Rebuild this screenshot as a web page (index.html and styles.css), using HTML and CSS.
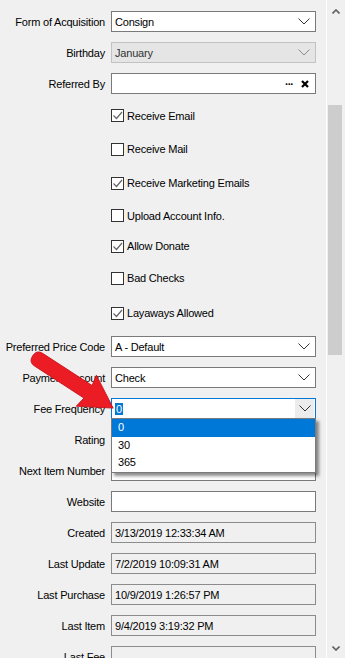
FILE: index.html
```html
<!DOCTYPE html>
<html lang="en">
<head>
    <meta charset="UTF-8">
    <meta name="viewport" content="width=device-width, initial-scale=1.0">
    <title>Customer Details</title>
    <link rel="stylesheet" href="styles.css">
</head>
<body>
    <div class="window">
        <div class="form">
            <div class="row">
                <span class="label">Form of Acquisition</span>
                <div class="combo">
                    <span class="value">Consign</span>
                    <span class="chevron"><svg width="12" height="7" viewBox="0 0 12 7"><polyline points="0.5,0.5 6,6 11.5,0.5" /></svg></span>
                </div>
            </div>
            <div class="row">
                <span class="label">Birthday</span>
                <div class="combo disabled">
                    <span class="value">January</span>
                    <span class="chevron"><svg width="12" height="7" viewBox="0 0 12 7"><polyline points="0.5,0.5 6,6 11.5,0.5" /></svg></span>
                </div>
            </div>
            <div class="row">
                <span class="label">Referred By</span>
                <div class="field lookup">
                    <span class="value"></span>
                    <span class="dots">&middot;&middot;&middot;</span>
                    <svg class="clear" width="8" height="8" viewBox="0 0 8 8"><path d="M1 1 L7 7 M7 1 L1 7" /></svg>
                </div>
            </div>

            <div class="check-row first">
                <span class="checkbox checked"><svg width="11" height="11" viewBox="0 0 11 11"><polyline points="1.5,5.5 4.5,8.5 10,2" /></svg></span>
                <span>Receive Email</span>
            </div>
            <div class="check-row">
                <span class="checkbox"></span>
                <span>Receive Mail</span>
            </div>
            <div class="check-row">
                <span class="checkbox checked"><svg width="11" height="11" viewBox="0 0 11 11"><polyline points="1.5,5.5 4.5,8.5 10,2" /></svg></span>
                <span>Receive Marketing Emails</span>
            </div>
            <div class="check-row short">
                <span class="checkbox"></span>
                <span>Upload Account Info.</span>
            </div>
            <div class="check-row shorter">
                <span class="checkbox checked"><svg width="11" height="11" viewBox="0 0 11 11"><polyline points="1.5,5.5 4.5,8.5 10,2" /></svg></span>
                <span>Allow Donate</span>
            </div>
            <div class="check-row">
                <span class="checkbox"></span>
                <span>Bad Checks</span>
            </div>
            <div class="check-row last">
                <span class="checkbox checked"><svg width="11" height="11" viewBox="0 0 11 11"><polyline points="1.5,5.5 4.5,8.5 10,2" /></svg></span>
                <span>Layaways Allowed</span>
            </div>

            <div class="row">
                <span class="label">Preferred Price Code</span>
                <div class="combo">
                    <span class="value">A - Default</span>
                    <span class="chevron"><svg width="12" height="7" viewBox="0 0 12 7"><polyline points="0.5,0.5 6,6 11.5,0.5" /></svg></span>
                </div>
            </div>
            <div class="row">
                <span class="label">Payment Account</span>
                <div class="combo">
                    <span class="value">Check</span>
                    <span class="chevron"><svg width="12" height="7" viewBox="0 0 12 7"><polyline points="0.5,0.5 6,6 11.5,0.5" /></svg></span>
                </div>
            </div>
            <div class="row">
                <span class="label">Fee Frequency</span>
                <div class="combo open">
                    <span class="value"><span class="selected">0</span></span>
                    <span class="chevron"><svg width="12" height="7" viewBox="0 0 12 7"><polyline points="0.5,0.5 6,6 11.5,0.5" /></svg></span>
                    <ul class="dropdown-list">
                        <li class="active">0</li>
                        <li>30</li>
                        <li>365</li>
                    </ul>
                </div>
            </div>
            <div class="row">
                <span class="label">Rating</span>
                <div class="field"></div>
            </div>
            <div class="row">
                <span class="label">Next Item Number</span>
                <div class="field"></div>
            </div>
            <div class="row">
                <span class="label">Website</span>
                <div class="field"></div>
            </div>
            <div class="row">
                <span class="label">Created</span>
                <div class="field readonly">3/13/2019 12:33:34 AM</div>
            </div>
            <div class="row">
                <span class="label">Last Update</span>
                <div class="field readonly">7/2/2019 10:09:31 AM</div>
            </div>
            <div class="row">
                <span class="label">Last Purchase</span>
                <div class="field readonly">10/9/2019 1:26:57 PM</div>
            </div>
            <div class="row">
                <span class="label">Last Item</span>
                <div class="field readonly">9/4/2019 3:19:32 PM</div>
            </div>
            <div class="row">
                <span class="label">Last Fee</span>
                <div class="field readonly"></div>
            </div>
        </div>

        <div class="scrollbar">
            <div class="scroll-btn up"><svg width="8" height="5" viewBox="0 0 8 5"><polyline points="0.5,4.5 4,1 7.5,4.5" /></svg></div>
            <div class="thumb"></div>
            <div class="scroll-space"></div>
            <div class="scroll-btn down"><svg width="8" height="5" viewBox="0 0 8 5"><polyline points="0.5,0.5 4,4 7.5,0.5" /></svg></div>
        </div>

        <!-- annotation arrow pointing at Fee Frequency -->
        <svg class="arrow" width="130" height="80" viewBox="0 0 130 80">
            <g transform="translate(36 18) rotate(33)">
                <path d="M3 -7.5 L62 -7.5 L60 -18.5 L92 0 L60 18.5 L62 7.5 L3 7.5 Q-4 7.5 -4 0 Q-4 -7.5 3 -7.5 Z" />
            </g>
        </svg>
    </div>
</body>
</html>
```

FILE: styles.css
```css
* {
    margin: 0;
    padding: 0;
    box-sizing: border-box;
}

body {
    background-color: #f0f0f0;
    font-family: "Liberation Sans", Arial, sans-serif;
    font-size: 11px;
    letter-spacing: -0.2px;
    color: #000;
}

.window {
    position: relative;
    display: flex;
    width: 345px;
    height: 658px;
    overflow: hidden;
}

.form {
    width: 326px;
    padding-top: 6px;
}

.row {
    display: grid;
    grid-template-columns: 105px 205px;
    column-gap: 6px;
    align-items: center;
    height: 31px;
}

.label {
    text-align: right;
    white-space: nowrap;
}

.field,
.combo {
    display: flex;
    align-items: center;
    height: 21px;
    padding: 0 3px;
    background-color: #fff;
    border: 1px solid #7a7a7a;
    white-space: nowrap;
}

.value {
    flex: 1;
}

.chevron {
    display: flex;
    align-items: center;
    justify-content: center;
    width: 16px;
    height: 100%;
}

.chevron polyline {
    fill: none;
    stroke: #333;
    stroke-width: 1;
}

.combo.disabled {
    background-color: #e5e5e5;
    border-color: #c2c2c2;
    color: #333;
}

.combo.disabled .chevron polyline {
    stroke: #8a8a8a;
}

.combo.open {
    position: relative;
    border-color: #0078d7;
}

.combo.open .chevron {
    width: 19px;
    margin-right: -2px;
    background-color: #ececec;
}

.selected {
    background-color: #0078d7;
    color: #fff;
    padding: 0 1px;
}

.lookup .dots {
    font-weight: bold;
    letter-spacing: -1px;
    margin-right: 8px;
}

.lookup .clear {
    margin-right: 3px;
}

.lookup .clear path {
    stroke: #000;
    stroke-width: 2.2;
}

.field.readonly {
    background-color: #f0f0f0;
    border-color: #8c8c8c;
}

.dropdown-list {
    position: absolute;
    top: 100%;
    left: -1px;
    width: 205px;
    list-style: none;
    background-color: #fff;
    border: 1px solid #7a7a7a;
    box-shadow: 3px 3px 3px rgba(0, 0, 0, 0.45);
    z-index: 2;
}

.dropdown-list li {
    height: 17.5px;
    line-height: 17.5px;
    padding-left: 6px;
}

.dropdown-list li.active {
    background-color: #0078d7;
    color: #fff;
}

/* Case a cocher */
.check-row {
    display: flex;
    align-items: center;
    gap: 3px;
    height: 34px;
    padding-left: 111px;
}

.check-row.first {
    height: 33px;
}

.check-row.short {
    height: 31px;
}

.check-row.shorter {
    height: 30px;
}

.check-row.last {
    height: 36px;
}

.checkbox {
    display: flex;
    align-items: center;
    justify-content: center;
    width: 13px;
    height: 13px;
    background-color: #fff;
    border: 1px solid #333;
}

.checkbox polyline {
    fill: none;
    stroke: #666;
    stroke-width: 1.2;
}

/* Barre de defilement */
.scrollbar {
    display: flex;
    flex-direction: column;
    width: 19px;
    border-left: 1px solid #fff;
    background-color: #f0f0f0;
}

.scroll-btn {
    display: flex;
    align-items: center;
    justify-content: center;
    height: 22px;
}

.scroll-btn.down {
    height: 20px;
}

.scroll-btn polyline {
    fill: none;
    stroke: #606060;
    stroke-width: 1.6;
}

.thumb {
    width: 14px;
    height: 250px;
    margin: 83px 0 0 1px;
    background-color: #cdcdcd;
}

.scroll-space {
    flex: 1;
}

.arrow {
    position: absolute;
    left: 0;
    top: 340px;
    z-index: 3;
}

.arrow path {
    fill: #ec1c24;
    stroke: #c8101a;
    stroke-width: 0.8;
}
```
